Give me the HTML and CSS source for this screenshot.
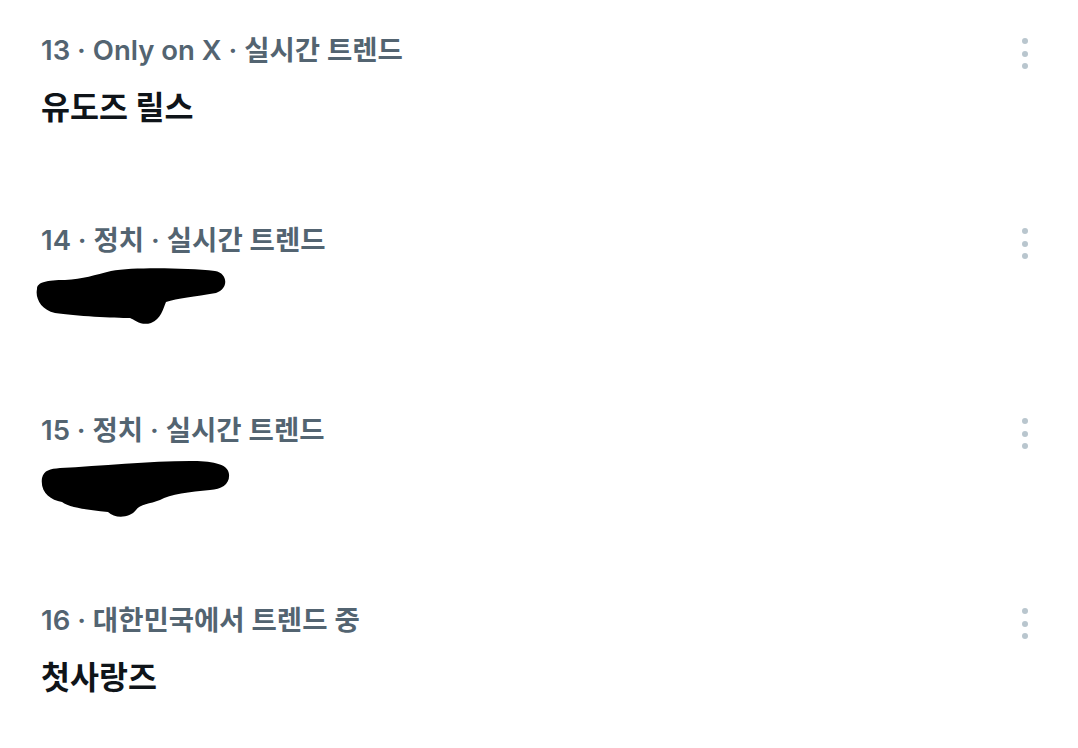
FILE: index.html
```html
<!DOCTYPE html>
<html lang="ko">
<head>
<meta charset="utf-8">
<link rel="stylesheet" href="styles.css">
</head>
<body>
<div class="list">
  <div class="item">
    <div class="content">
      <div class="meta">13 · Only on X · 실시간 트렌드</div>
      <div class="title">유도즈 릴스</div>
    </div>
    <div class="more"><span></span><span></span><span></span></div>
  </div>
  <div class="item">
    <div class="content">
      <div class="meta">14 · 정치 · 실시간 트렌드</div>
      <div class="title redact">
        <svg class="blob blob1" width="192" height="58" viewBox="0 0 192 58">
          <path d="M2 22 C2 15 12 13 30 13 C48 12 60 8 76 4 C100 0 150 1 180 4 C193 6 194 22 181 26 C160 30 142 31 131 35 C128 42 126 52 116 56 C106 59 100 53 95 51 C80 51 40 49 20 46 C6 43 0 31 2 22 Z" fill="#000"/>
        </svg>
      </div>
    </div>
    <div class="more"><span></span><span></span><span></span></div>
  </div>
  <div class="item">
    <div class="content">
      <div class="meta">15 · 정치 · 실시간 트렌드</div>
      <div class="title redact">
        <svg class="blob blob2" width="192" height="62" viewBox="0 0 192 62">
          <path d="M2 20 C4 12 10 11 20 10 C60 8 110 3 150 3 C170 3 188 5 189 16 C190 26 182 31 170 32 C150 34 130 36 120 42 C110 46 100 46 96 52 C90 60 75 61 68 54 C50 52 30 50 22 44 C10 42 0 34 2 20 Z" fill="#000"/>
        </svg>
      </div>
    </div>
    <div class="more"><span></span><span></span><span></span></div>
  </div>
  <div class="item last">
    <div class="content">
      <div class="meta">16 · 대한민국에서 트렌드 중</div>
      <div class="title">첫사랑즈</div>
    </div>
    <div class="more"><span></span><span></span><span></span></div>
  </div>
</div>
</body>
</html>
```
FILE: styles.css
```css
html, body {
  margin: 0;
  padding: 0;
  background: #ffffff;
}
body {
  font-family: Inter, "Noto Sans CJK KR", sans-serif;
}
.list {
  display: flex;
  flex-direction: column;
  padding: 32px 0 0 41px;
}
.item {
  display: flex;
  justify-content: space-between;
  align-items: flex-start;
  height: 190px;
  padding-right: 50px;
}
.item.last {
  height: auto;
  padding-bottom: 28px;
}
.content {
  display: flex;
  flex-direction: column;
  gap: 20px;
}
.meta {
  font-size: 27.5px;
  line-height: 36px;
  font-weight: 600;
  color: #536471;
}
.title {
  font-size: 31.5px;
  line-height: 40px;
  font-weight: 700;
  color: #0f1419;
}
.redact {
  position: relative;
  height: 40px;
}
.blob {
  position: absolute;
  display: block;
}
.blob1 {
  left: -6px;
  top: -11px;
}
.blob2 {
  left: -1px;
  top: -10px;
}
.more {
  display: flex;
  flex-direction: column;
  gap: 6.5px;
  margin-top: 6px;
}
.more span {
  width: 6px;
  height: 6px;
  border-radius: 50%;
  background: #b9c6ce;
}
```
